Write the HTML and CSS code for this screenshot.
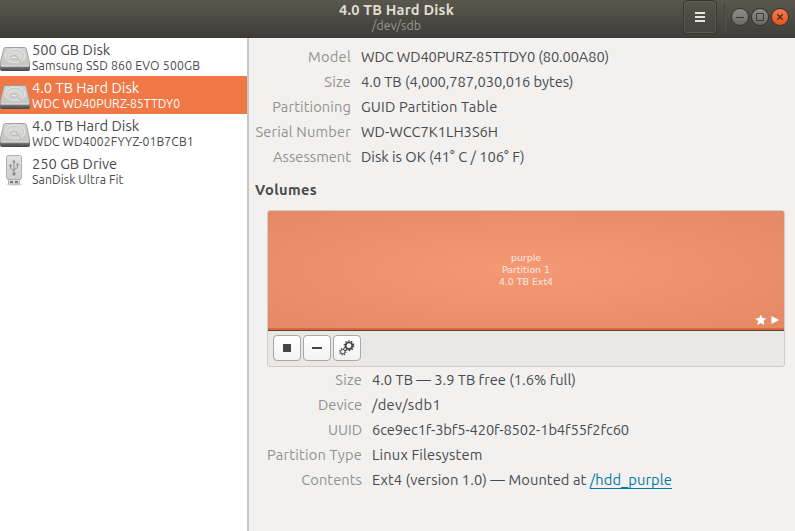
FILE: index.html
```html
<!DOCTYPE html>
<html lang="en">
<head>
<meta charset="utf-8">
<title>Disks</title>
<link rel="stylesheet" href="styles.css">
</head>
<body>
<svg width="0" height="0" class="defs" aria-hidden="true">
  <defs>
    <linearGradient id="metal" x1="0" y1="0" x2="0" y2="1"><stop offset="0" stop-color="#d4d4d2"/><stop offset="1" stop-color="#c4c4c2"/></linearGradient>
    <linearGradient id="stick" x1="0" y1="0" x2="0" y2="1"><stop offset="0" stop-color="#e2e2e0"/><stop offset="1" stop-color="#cececc"/></linearGradient>
    <linearGradient id="edge" x1="0" y1="0" x2="0" y2="1"><stop offset="0" stop-color="#a0a09e"/><stop offset="1" stop-color="#444"/></linearGradient>
    <symbol id="hdd" viewBox="0 0 32 32">
      <path d="M0 21.500V26Q0 28 2 28H28Q30 28 30 26V21Z" fill="url(#edge)"/>
      <path d="M5.500 4.500H24.500Q26 4.500 26.400 6L29.800 21Q30 23.500 28 23.500H1.500Q-.3 23.500 0 21L3.700 6Q4 4.500 5.500 4.500Z" fill="url(#metal)" stroke="#92928f" stroke-width=".8"/>
      <ellipse cx="15.200" cy="12.800" rx="10" ry="6.800" fill="#d9d9d7" stroke="#ecece9" stroke-width=".8"/>
      <ellipse cx="15" cy="12.800" rx="8.600" ry="5.600" fill="none" stroke="#bcbcba" stroke-width=".6"/>
      <ellipse cx="14" cy="14.500" rx="3.800" ry="1.800" fill="#e2e2e0" stroke="#a4a4a2" stroke-width=".8"/>
      <path d="M17 15.500 20 17.500 21 20" fill="none" stroke="#bcbcba" stroke-width="1.200"/>
      <path d="M1 23H29" stroke="#eeeeec" stroke-width=".8"/>
      <path d="M2.500 26H19" stroke="#555" stroke-width="1"/>
    </symbol>
    <symbol id="usb" viewBox="0 0 32 32">
      <ellipse cx="14" cy="29.500" rx="8" ry="1.200" fill="#000" opacity=".15"/>
      <path d="M8.500 23H19.500V29H8.500Z" fill="#ddd" stroke="#aaa" stroke-width=".8"/>
      <path d="M10 26h3v2h-3zm5 0h3v2h-3z" fill="#777"/>
      <rect x="6.500" y="0.500" width="15" height="24" rx="2" fill="url(#stick)" stroke="#b0b0ae"/>
      <path d="M14 7V18M10.500 11V13.500L14 16M17.500 10V12.500L14 15" fill="none" stroke="#8c8c8a"/>
      <path d="M14 4.500 12.300 7.500H15.700Z" fill="#8c8c8a"/>
      <circle cx="14" cy="19" r="1.700" fill="#8c8c8a"/><circle cx="10.500" cy="10.500" r="1.200" fill="#8c8c8a"/><path d="M16.500 8.500h2v2h-2z" fill="#8c8c8a"/>
    </symbol>
  </defs>
</svg>
<div class="window">
  <header class="titlebar">
    <div class="titles">
      <h1 class="title">4.0 TB Hard Disk</h1>
      <p class="subtitle">/dev/sdb</p>
    </div>
    <div class="controls">
      <button class="menu" aria-label="Menu"><svg width="10" height="10" viewBox="0 0 10 10"><path d="M0 1H10M0 5H10M0 9H10" stroke="#e8e5df" stroke-width="2"/></svg></button>
      <span class="separator"></span>
      <button class="wm" aria-label="Minimize"><svg width="16" height="16" viewBox="0 0 16 16"><path d="M4 8.500H12" stroke="#3a3934"/></svg></button>
      <button class="wm" aria-label="Maximize"><svg width="16" height="16" viewBox="0 0 16 16"><path d="M4.500 4.500H11.500V11.500H4.500Z" fill="none" stroke="#3a3934"/></svg></button>
      <button class="wm close" aria-label="Close"><svg width="16" height="16" viewBox="0 0 16 16"><path d="M5.300 5.300 10.700 10.700M10.700 5.300 5.300 10.700" stroke="#493020" stroke-width="1.500"/></svg></button>
    </div>
  </header>
  <div class="body">
    <nav class="drives">
      <a class="drive"><svg class="drive-icon"><use href="#hdd"/></svg><span class="drive-text"><span class="name">500 GB Disk</span><span class="model m1">Samsung SSD 860 EVO 500GB</span></span></a>
      <a class="drive selected"><svg class="drive-icon"><use href="#hdd"/></svg><span class="drive-text"><span class="name">4.0 TB Hard Disk</span><span class="model m2">WDC WD40PURZ-85TTDY0</span></span></a>
      <a class="drive"><svg class="drive-icon"><use href="#hdd"/></svg><span class="drive-text"><span class="name">4.0 TB Hard Disk</span><span class="model m3">WDC WD4002FYYZ-01B7CB1</span></span></a>
      <a class="drive"><svg class="drive-icon stick"><use href="#usb"/></svg><span class="drive-text"><span class="name">250 GB Drive</span><span class="model m3">SanDisk Ultra Fit</span></span></a>
    </nav>
    <main class="details">
      <dl class="facts">
        <dt><span class="k1">Model</span></dt><dd><span class="v1">WDC WD40PURZ-85TTDY0 (80.00A80)</span></dd>
        <dt><span class="k2">Size</span></dt><dd><span class="v2">4.0 TB (4,000,787,030,016 bytes)</span></dd>
        <dt><span class="k3">Partitioning</span></dt><dd><span class="v3">GUID Partition Table</span></dd>
        <dt><span class="k4">Serial Number</span></dt><dd><span>WD-WCC7K1LH3S6H</span></dd>
        <dt><span>Assessment</span></dt><dd><span>Disk is OK (41° C / 106° F)</span></dd>
      </dl>
      <h2 class="heading">Volumes</h2>
      <section class="volumes">
        <div class="partition">
          <div class="partition-text"><span>purple</span><span>Partition 1</span><span>4.0 TB Ext4</span></div>
          <svg class="flags" width="26" height="12" viewBox="0 0 26 12"><path d="M5.800.4 7.500 4 11.400 4.400 8.500 7.100 9.300 11 5.800 9 2.300 11 3.100 7.100.200 4.400 4.100 4Z" fill="#fff"/><path d="M16.500 2 24 6 16.500 10Z" fill="#fff"/></svg>
        </div>
        <div class="toolbar">
          <button class="tool" aria-label="Unmount"><svg width="16" height="16"><path d="M4 4H12V12H4Z" fill="#454545"/></svg></button>
          <button class="tool" aria-label="Delete"><svg width="16" height="16"><path d="M3 7H13V9H3Z" fill="#454545"/></svg></button>
          <button class="tool" aria-label="Options"><svg width="16" height="16"><circle cx="10" cy="5.700" r="3.300" fill="none" stroke="#454545" stroke-width="1.800"/><circle cx="10" cy="5.700" r="4.700" fill="none" stroke="#454545" stroke-width="1.400" stroke-dasharray="1.480 1.480"/><circle cx="3.800" cy="11.700" r="2.200" fill="none" stroke="#454545" stroke-width="1"/><circle cx="3.800" cy="11.700" r="3.100" fill="none" stroke="#454545" stroke-width="1.200" stroke-dasharray="1.220 1.220"/></svg></button>
        </div>
      </section>
      <dl class="facts volume-facts">
        <dt><span class="k2">Size</span></dt><dd><span>4.0 TB — 3.9 TB free (1.6% full)</span></dd>
        <dt><span>Device</span></dt><dd><span class="v7">/dev/sdb1</span></dd>
        <dt><span>UUID</span></dt><dd><span class="v8">6ce9ec1f-3bf5-420f-8502-1b4f55f2fc60</span></dd>
        <dt><span class="k9">Partition Type</span></dt><dd><span class="v9">Linux Filesystem</span></dd>
        <dt><span class="k10">Contents</span></dt><dd><span class="v10">Ext4 (version 1.0) — Mounted at <a class="link">/hdd_purple</a></span></dd>
      </dl>
    </main>
  </div>
</div>
</body>
</html>
```
FILE: styles.css
```css
* { box-sizing: border-box; }
body, h1, h2, p, dl, dd { margin: 0; }
body { font: 14.667px/25px "Ubuntu", "Noto Sans", sans-serif; color: #4a4a4a; overflow: hidden; }
button { padding: 0; margin: 0; font: inherit; display: flex; align-items: center; justify-content: center; }
.defs { position: absolute; }
.window { width: 795px; height: 531px; display: flex; flex-direction: column; background: #f2f1f0; }
.titlebar { height: 38px; flex: none; display: grid; grid-template-columns: 1fr; background: linear-gradient(#5a574d, #3e3d38); border-bottom: 1px solid #393834; }
.titles, .controls { grid-area: 1 / 1; }
.titles { text-align: center; padding: 1px 2px 0 0; }
.title { font-size: 14.667px; line-height: 18px; font-weight: 700; color: #dfdbd2; letter-spacing: .18px; }
.subtitle { font-size: 12.222px; line-height: 14px; color: #9c988e; letter-spacing: .1px; }
.controls { display: flex; align-items: flex-start; justify-content: flex-end; padding-right: 6px; }
.menu { width: 34px; height: 34px; background: linear-gradient(#56534a, #46443e); border: 1px solid #37362f; border-radius: 4px; box-shadow: inset 0 0 0 1px #5d5a50; }
.separator { width: 2px; height: 28px; margin: 3px 3px 0 7px; background: #45433b; border-right: 1px solid #57544b; }
.wm { width: 18px; height: 18px; margin: 8px 0 0 2px; border: 1px solid #35342f; border-radius: 50%; background: linear-gradient(#918f88, #6c6a64); }
.wm.close { background: linear-gradient(#f67b50, #e8531e); }
.body { flex: 1; display: flex; min-height: 0; }
.drives { width: 249px; flex: none; background: #fff; border-right: 2px solid #c9c7c5; }
.drive { display: flex; height: 38px; }
.drive.selected { background: #f07746; color: #fff; }
.drive-icon { width: 32px; height: 32px; margin-top: 5px; flex: none; }
.drive-icon.stick { margin-top: 3px; }
.drive-text { display: flex; flex-direction: column; padding-top: 3px; white-space: nowrap; }
.name { font-size: 14.667px; line-height: 18px; }
.model { font-size: 12.222px; line-height: 14px; }
.m1 { letter-spacing: .2px; }
.m2 { letter-spacing: .05px; }
.m3 { letter-spacing: .1px; }
.details { flex: 1; padding: 6px 10px 0 6px; }
.facts { display: grid; grid-template-columns: 96px 1fr; column-gap: 10px; grid-auto-rows: 25px; white-space: nowrap; }
.facts dt { color: #95918b; display: flex; justify-content: flex-end; }
.k1 { letter-spacing: .25px; }
.k2 { letter-spacing: .2px; }
.k3 { letter-spacing: .1px; }
.k4 { letter-spacing: .17px; }
.k9 { letter-spacing: .2px; }
.k10 { letter-spacing: .07px; }
.v1 { letter-spacing: -.12px; }
.v2 { letter-spacing: -.06px; }
.v3 { letter-spacing: .15px; }
.v7 { letter-spacing: .35px; }
.v8 { letter-spacing: -.1px; }
.v9 { letter-spacing: .16px; }
.v10 { letter-spacing: .08px; }
.heading { font-size: 14.667px; line-height: 25px; letter-spacing: .4px; padding-top: 8px; height: 41px; }
.volumes { margin-left: 12px; height: 157px; border: 1px solid #cfcdcb; border-radius: 3px; background: #eae8e7; overflow: hidden; }
.partition { height: 120px; display: grid; color: #fbeae2; border-bottom: 1px solid #494743; background: linear-gradient(transparent 117px, #e0653a 117px), radial-gradient(ellipse farthest-corner, #f49974, #e38963); }
.partition-text, .flags { grid-area: 1 / 1; }
.partition-text { display: flex; flex-direction: column; justify-content: center; align-items: center; padding-bottom: 2px; font: 9.4px/12px "DejaVu Sans", sans-serif; }
.flags { align-self: end; justify-self: end; margin: 0 3px 4px 0; }
.toolbar { display: flex; gap: 2px; padding: 4px 5px; }
.tool { width: 28px; height: 26px; border: 1px solid #aaa7a4; border-radius: 4px; background: linear-gradient(#fff, #f3f3f2); }
.volume-facts { grid-template-columns: 107px 1fr; }
.link { color: #007a9e; text-decoration: underline; text-decoration-skip-ink: none; text-decoration-thickness: 1px; text-underline-offset: 3px; }
```
